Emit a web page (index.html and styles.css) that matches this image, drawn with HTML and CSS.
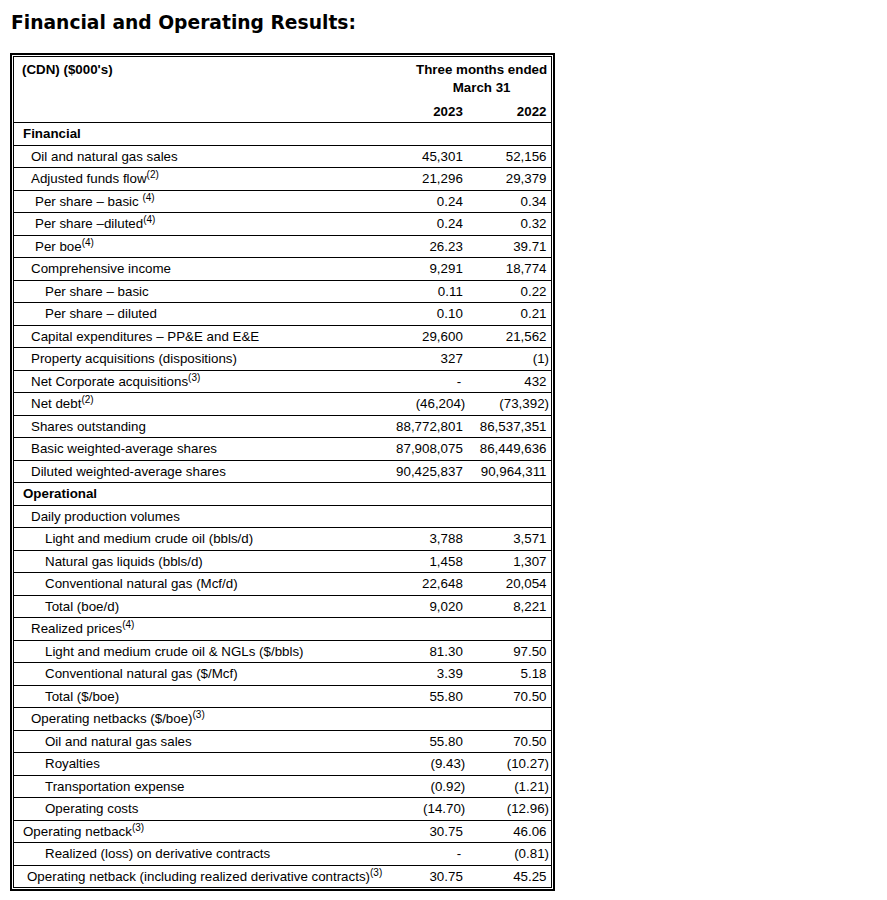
FILE: index.html
```html
<!DOCTYPE html>
<html lang="en">
<head>
<meta charset="utf-8">
<title>Financial and Operating Results</title>
<link rel="stylesheet" href="styles.css">
</head>
<body>
<h1 class="title">Financial and Operating Results:</h1>
<div class="frame">
<table class="results">
<colgroup><col class="c-label"><col class="c-v1"><col class="c-v2"></colgroup>
<thead>
<tr class="h1row">
<th class="hlabel" rowspan="2">(CDN) ($000's)</th>
<th class="hperiod" colspan="2">Three months ended<br>March 31</th>
</tr>
<tr class="h2row">
<th class="v1"><span class="p">2023</span></th>
<th class="v2"><span class="p">2022</span></th>
</tr>
</thead>
<tbody>
<tr><td class="l0 b">Financial</td><td class="v1"></td><td class="v2"></td></tr>
<tr><td class="l1">Oil and natural gas sales</td><td class="v1"><span class="p">45,301</span></td><td class="v2"><span class="p">52,156</span></td></tr>
<tr><td class="l1">Adjusted funds flow<sup>(2)</sup></td><td class="v1"><span class="p">21,296</span></td><td class="v2"><span class="p">29,379</span></td></tr>
<tr><td class="l1b">Per share – basic <sup>(4)</sup></td><td class="v1"><span class="p">0.24</span></td><td class="v2"><span class="p">0.34</span></td></tr>
<tr><td class="l1b">Per share –diluted<sup>(4)</sup></td><td class="v1"><span class="p">0.24</span></td><td class="v2"><span class="p">0.32</span></td></tr>
<tr><td class="l1b">Per boe<sup>(4)</sup></td><td class="v1"><span class="p">26.23</span></td><td class="v2"><span class="p">39.71</span></td></tr>
<tr><td class="l1">Comprehensive income</td><td class="v1"><span class="p">9,291</span></td><td class="v2"><span class="p">18,774</span></td></tr>
<tr><td class="l2">Per share – basic</td><td class="v1"><span class="p">0.11</span></td><td class="v2"><span class="p">0.22</span></td></tr>
<tr><td class="l2">Per share – diluted</td><td class="v1"><span class="p">0.10</span></td><td class="v2"><span class="p">0.21</span></td></tr>
<tr><td class="l1">Capital expenditures – PP&amp;E and E&amp;E</td><td class="v1"><span class="p">29,600</span></td><td class="v2"><span class="p">21,562</span></td></tr>
<tr><td class="l1">Property acquisitions (dispositions)</td><td class="v1"><span class="p">327</span></td><td class="v2">(1)</td></tr>
<tr><td class="l1">Net Corporate acquisitions<sup>(3)</sup></td><td class="v1"><span class="d">-</span></td><td class="v2"><span class="p">432</span></td></tr>
<tr><td class="l1">Net debt<sup>(2)</sup></td><td class="v1">(46,204)</td><td class="v2">(73,392)</td></tr>
<tr><td class="l1">Shares outstanding</td><td class="v1"><span class="p">88,772,801</span></td><td class="v2"><span class="p">86,537,351</span></td></tr>
<tr><td class="l1">Basic weighted-average shares</td><td class="v1"><span class="p">87,908,075</span></td><td class="v2"><span class="p">86,449,636</span></td></tr>
<tr><td class="l1">Diluted weighted-average shares</td><td class="v1"><span class="p">90,425,837</span></td><td class="v2"><span class="p">90,964,311</span></td></tr>
<tr><td class="l0 b">Operational</td><td class="v1"></td><td class="v2"></td></tr>
<tr><td class="l1">Daily production volumes</td><td class="v1"></td><td class="v2"></td></tr>
<tr><td class="l2">Light and medium crude oil (bbls/d)</td><td class="v1"><span class="p">3,788</span></td><td class="v2"><span class="p">3,571</span></td></tr>
<tr><td class="l2">Natural gas liquids (bbls/d)</td><td class="v1"><span class="p">1,458</span></td><td class="v2"><span class="p">1,307</span></td></tr>
<tr><td class="l2">Conventional natural gas (Mcf/d)</td><td class="v1"><span class="p">22,648</span></td><td class="v2"><span class="p">20,054</span></td></tr>
<tr><td class="l2">Total (boe/d)</td><td class="v1"><span class="p">9,020</span></td><td class="v2"><span class="p">8,221</span></td></tr>
<tr><td class="l1">Realized prices<sup>(4)</sup></td><td class="v1"></td><td class="v2"></td></tr>
<tr><td class="l2">Light and medium crude oil &amp; NGLs ($/bbls)</td><td class="v1"><span class="p">81.30</span></td><td class="v2"><span class="p">97.50</span></td></tr>
<tr><td class="l2">Conventional natural gas ($/Mcf)</td><td class="v1"><span class="p">3.39</span></td><td class="v2"><span class="p">5.18</span></td></tr>
<tr><td class="l2">Total ($/boe)</td><td class="v1"><span class="p">55.80</span></td><td class="v2"><span class="p">70.50</span></td></tr>
<tr><td class="l1">Operating netbacks ($/boe)<sup>(3)</sup></td><td class="v1"></td><td class="v2"></td></tr>
<tr><td class="l2">Oil and natural gas sales</td><td class="v1"><span class="p">55.80</span></td><td class="v2"><span class="p">70.50</span></td></tr>
<tr><td class="l2">Royalties</td><td class="v1">(9.43)</td><td class="v2">(10.27)</td></tr>
<tr><td class="l2">Transportation expense</td><td class="v1">(0.92)</td><td class="v2">(1.21)</td></tr>
<tr><td class="l2">Operating costs</td><td class="v1">(14.70)</td><td class="v2">(12.96)</td></tr>
<tr><td class="l0">Operating netback<sup>(3)</sup></td><td class="v1"><span class="p">30.75</span></td><td class="v2"><span class="p">46.06</span></td></tr>
<tr><td class="l2">Realized (loss) on derivative contracts</td><td class="v1"><span class="d">-</span></td><td class="v2">(0.81)</td></tr>
<tr class="last"><td class="lx">Operating netback (including realized derivative contracts)<sup>(3)</sup></td><td class="v1"><span class="p">30.75</span></td><td class="v2"><span class="p">45.25</span></td></tr>
</tbody>
</table>
</div>
</body>
</html>
```
FILE: styles.css
```css
html, body {
  margin: 0;
  padding: 0;
  background: #fff;
  color: #000;
}
body {
  padding: 11px 10px 20px 10px;
  font-family: "Liberation Sans", Arial, sans-serif;
}
.title {
  font-family: "DejaVu Sans", Verdana, sans-serif;
  font-weight: bold;
  font-size: 18.7px;
  line-height: 24px;
  margin: 0 0 18px 1px;
}
.frame {
  display: inline-block;
  border: 2px solid #000;
  padding: 1px;
}
.results {
  border-collapse: collapse;
  border: 1px solid #000;
  width: 539px;
  table-layout: fixed;
  font-size: 13.33px;
}
.c-label { width: 369px; }
.c-v1 { width: 85px; }
.c-v2 { width: 83px; }
.results th {
  font-weight: bold;
  padding: 0;
}
.h1row th {
  height: 40px;
  line-height: 18px;
  vertical-align: top;
  padding-top: 4px;
}
.results .hlabel {
  text-align: left;
  padding-left: 8px;
  border-bottom: 1px solid #000;
}
.results .hperiod {
  text-align: center;
  padding-left: 29px;
}
.h2row th {
  height: 21px;
  vertical-align: middle;
  border-bottom: 1px solid #000;
}
.results td {
  height: 21.5px;
  padding: 0;
  line-height: 15px;
  vertical-align: middle;
  border-bottom: 1px solid #000;
  white-space: nowrap;
}
.results .v1 {
  text-align: right;
  padding-right: 3px;
}
.results .v2 {
  text-align: right;
  padding-right: 2px;
}
.p { padding-right: 2.5px; }
.d { padding-right: 4px; }
.b { font-weight: bold; }
.results .l0 { padding-left: 9px; }
.results .lx { padding-left: 13px; }
.results .l1 { padding-left: 17px; }
.results .l1b { padding-left: 21px; }
.results .l2 { padding-left: 31px; }
sup {
  font-size: 10px;
  line-height: 0;
  vertical-align: 5px;
}
```
